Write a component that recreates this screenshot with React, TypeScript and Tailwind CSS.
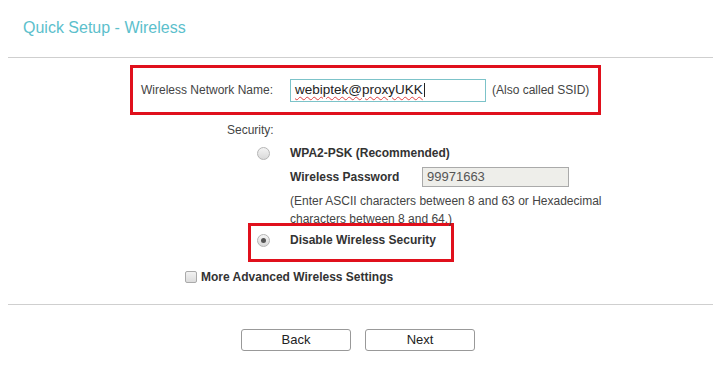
import React from 'react';

function Radio({ checked }: { checked?: boolean }) {
  return (
    <span className="flex h-[13px] w-[13px] items-center justify-center rounded-full border border-[#b5b5b5] bg-gradient-to-b from-[#f4f4f4] to-[#d9d9d9]">
      {checked && <span className="h-[5px] w-[5px] rounded-full bg-[#555]" />}
    </span>
  );
}

export default function App() {
  return (
    <div className="h-[369px] w-[721px] bg-white font-['Liberation_Sans',Arial,sans-serif] text-[12px] text-[#333]">
      <div className="h-[57px] pl-[23px] pt-[18px]">
        <h1 className="text-[16px] leading-[20px] text-[#5cc0cc]">Quick Setup - Wireless</h1>
      </div>
      <div className="mx-[8px] border-t border-[#cfcfcf]" />

      <div className="ml-[130px] mt-[7px] flex h-[50px] w-[471px] items-center border-[3px] border-[#e0101c] pl-[8px]">
        <span className="w-[149px] text-[#444]">Wireless Network Name:</span>
        <div className="flex h-[23px] w-[196px] items-center border border-[#7cc3c9] px-[4px] text-[13.5px] text-[#222]">
          <span className="underline decoration-wavy decoration-[#e04040] decoration-1 underline-offset-2">
            webiptek@proxyUKK
          </span>
          <span className="ml-px h-[14px] w-px bg-[#222]" />
        </div>
        <span className="ml-[6px] text-[#444]">(Also called SSID)</span>
      </div>

      <div className="ml-[227px] mt-[8px] leading-[14px] text-[#444]">Security:</div>

      <div className="mt-[8px] flex h-[16px] items-center">
        <span className="ml-[257px] w-[33px]">
          <Radio />
        </span>
        <span className="font-bold">WPA2-PSK (Recommended)</span>
      </div>

      <div className="ml-[290px] mt-[6px] flex h-[20px] items-center">
        <span className="w-[132px] font-bold">Wireless Password</span>
        <div className="flex h-[20px] w-[147px] items-center border border-[#aaa] bg-[#eeeeea] px-[4px] text-[13px] text-[#555]">
          99971663
        </div>
      </div>

      <div className="ml-[290px] mt-[5px] w-[330px] leading-[18px] text-[#444]">
        (Enter ASCII characters between 8 and 63 or Hexadecimal characters between 8 and 64.)
      </div>

      <div className="ml-[248px] mt-[-5px] flex h-[39px] w-[206px] items-start border-[3px] border-[#e0101c] pt-[6px]">
        <div className="flex h-[16px] items-center">
          <span className="ml-[6px] w-[33px]">
            <Radio checked />
          </span>
          <span className="font-bold">Disable Wireless Security</span>
        </div>
      </div>

      <div className="ml-[185px] mt-[7px] flex h-[16px] items-center">
        <span className="mr-[4px] h-[12px] w-[12px] rounded-[2px] border border-[#aaa] bg-gradient-to-b from-[#f2f2f2] to-[#dcdcdc]" />
        <span className="font-bold">More Advanced Wireless Settings</span>
      </div>

      <div className="mx-[8px] mt-[19px] border-t border-[#cfcfcf]" />

      <div className="ml-[241px] mt-[24px] flex gap-[14px]">
        <button className="h-[22px] w-[110px] rounded-[3px] border border-[#999] bg-white text-[13px] text-[#222]">
          Back
        </button>
        <button className="h-[22px] w-[110px] rounded-[3px] border border-[#999] bg-white text-[13px] text-[#222]">
          Next
        </button>
      </div>
    </div>
  );
}
